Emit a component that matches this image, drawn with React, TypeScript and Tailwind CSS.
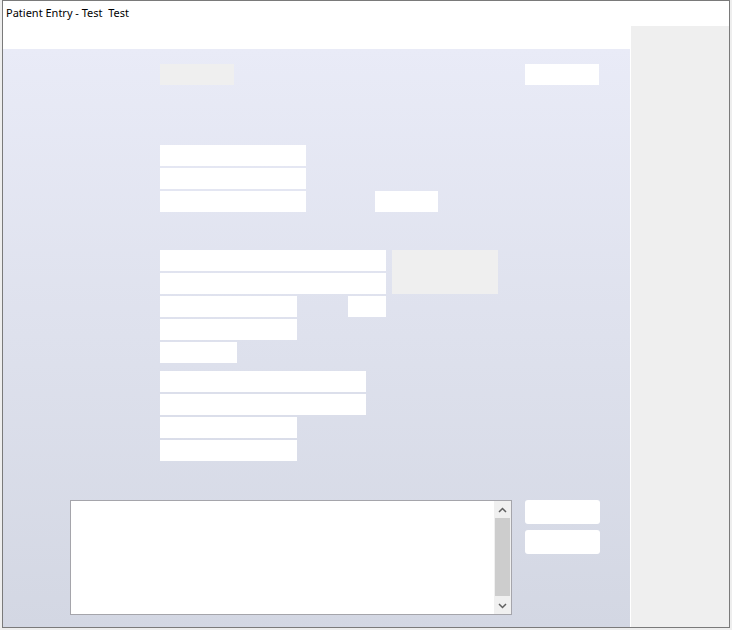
import React from "react";

const Box = ({ w, h = 21, gray = false }: { w: number; h?: number; gray?: boolean }) => (
  <div className={gray ? "bg-[#efefef]" : "bg-white"} style={{ width: w, height: h }} />
);

export default function App() {
  return (
    <div className="w-[732px] h-[630px] bg-[#eeeeee] pl-[2px] overflow-hidden">
      <div className="w-[728px] h-[628px] border border-[#7a7a7a] bg-white flex">
        {/* left column */}
        <div className="w-[627px] flex flex-col">
          <div className="h-[48px] pl-[3px] pt-0">
            <div
              className="whitespace-pre text-[11px] leading-[10px] pt-[7px] text-black"
              style={{ fontFamily: '"Noto Sans", "Segoe UI", sans-serif' }}
            >
              Patient Entry - Test  Test
            </div>
          </div>
          <div className="flex-1 bg-gradient-to-b from-[#e9ebf7] to-[#d3d7e3] flex flex-col">
            {/* form */}
            <div className="pl-[157px] pt-[15px] flex flex-col">
              <div className="w-[439px] flex justify-between">
                <Box w={74} gray />
                <Box w={74} />
              </div>
              <div className="mt-[60px] flex flex-col gap-[2px]">
                <Box w={146} />
                <Box w={146} />
                <div className="flex">
                  <Box w={146} />
                  <div className="ml-[69px]">
                    <Box w={63} />
                  </div>
                </div>
              </div>
              <div className="mt-[38px] flex flex-col gap-[2px]">
                <div className="flex">
                  <div className="flex flex-col gap-[2px]">
                    <Box w={226} />
                    <Box w={226} />
                  </div>
                  <div className="ml-[6px]">
                    <Box w={106} h={44} gray />
                  </div>
                </div>
                <div className="flex">
                  <Box w={137} />
                  <div className="ml-[51px]">
                    <Box w={38} />
                  </div>
                </div>
                <Box w={137} />
                <Box w={77} />
              </div>
              <div className="mt-[8px] flex flex-col gap-[2px]">
                <Box w={206} />
                <Box w={206} />
                <Box w={137} />
                <Box w={137} />
              </div>
            </div>
            {/* bottom */}
            <div className="ml-[67px] mt-[39px] flex">
              <div className="w-[442px] h-[115px] border border-[#a5a5ab] bg-white flex justify-end">
                <div className="w-[17px] h-full bg-[#f0f0f0] flex flex-col items-center">
                  <div className="h-[17px] w-full flex items-center justify-center">
                    <svg width="9" height="6" viewBox="0 0 9 6">
                      <path d="M1 5 L4.5 1.5 L8 5" fill="none" stroke="#606060" strokeWidth="1.5" />
                    </svg>
                  </div>
                  <div className="flex-1 w-full px-[1px]">
                    <div className="w-full h-[78px] bg-[#cdcdcd]" />
                  </div>
                  <div className="h-[17px] w-full flex items-center justify-center">
                    <svg width="9" height="6" viewBox="0 0 9 6">
                      <path d="M1 1 L4.5 4.5 L8 1" fill="none" stroke="#606060" strokeWidth="1.5" />
                    </svg>
                  </div>
                </div>
              </div>
              <div className="ml-[13px] flex flex-col gap-[6px]">
                <div className="w-[75px] h-[24px] bg-white rounded-[3px]" />
                <div className="w-[75px] h-[24px] bg-white rounded-[3px]" />
              </div>
            </div>
          </div>
        </div>
        {/* right column */}
        <div className="flex-1 pt-[25px] pl-[1px] flex">
          <div className="flex-1 bg-[#efefef]" />
        </div>
      </div>
    </div>
  );
}
